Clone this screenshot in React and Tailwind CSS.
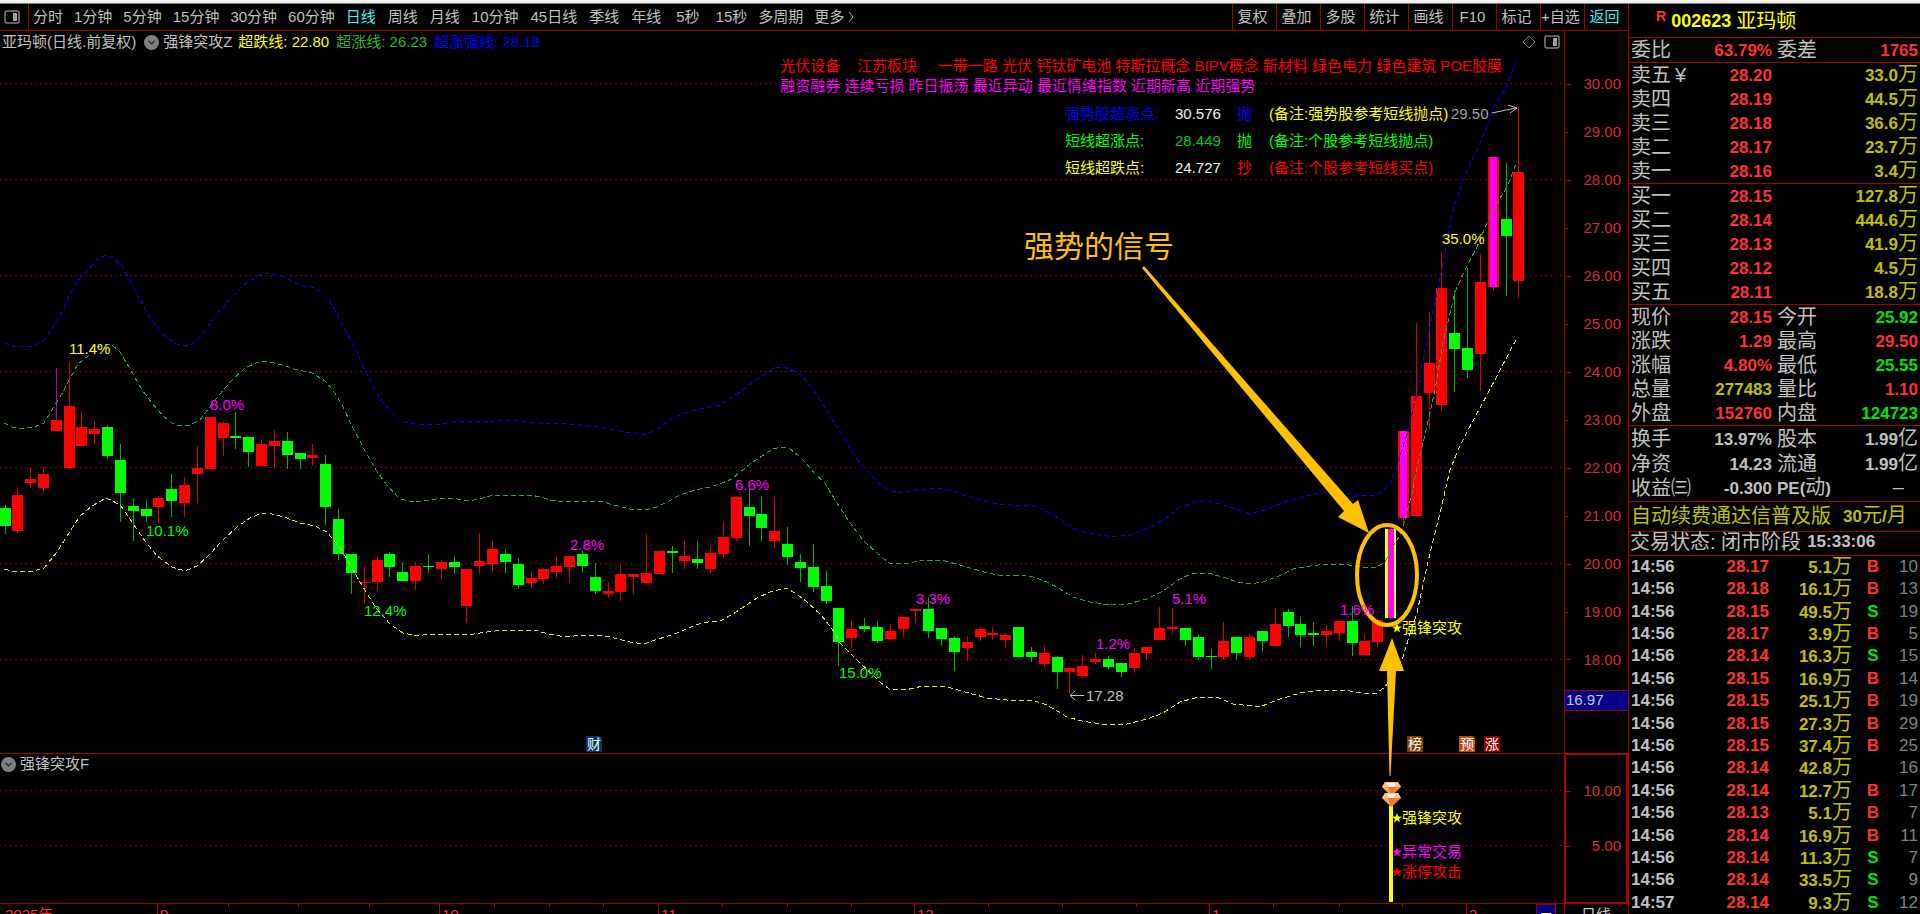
import { ChevronDown } from "lucide-react";

const MINUTES = ["分时", "1分钟", "5分钟", "15分钟", "30分钟", "60分钟"];
const PERIODS = ["日线", "周线", "月线", "10分钟", "45日线", "季线", "年线"];
const SECONDS = ["5秒", "15秒"];
const TOOLS = ["复权", "叠加", "多股", "统计", "画线", "F10", "标记", "+自选", "返回"];

// plot area, in chart units
const PLOT = { w: 1564, top: 31, h: 873 };
const priceY = (p) => 84 + (30 - p) * 48;

// [high, top, bottom, low, kind]
// R up, G down, P up with a violet wick, M violet core, Y signal bar
const CANDLES = [
  [505, 508, 526, 534, "G"], [487, 495, 531, 533, "R"], [468, 479, 483, 488, "R"], [468, 474, 488, 493, "R"],
  [368, 420, 431, 431, "P"], [362, 406, 468, 469, "R"], [411, 427, 446, 446, "R"], [421, 429, 434, 444, "R"],
  [425, 427, 456, 459, "G"], [444, 460, 493, 522, "G"], [498, 506, 511, 541, "G"], [501, 509, 516, 522, "G"],
  [496, 498, 507, 523, "R"], [474, 489, 501, 517, "G"], [477, 485, 503, 517, "R"], [446, 468, 474, 503, "R"],
  [417, 417, 469, 469, "R"], [421, 423, 438, 456, "R"], [412, 436, 438, 449, "G"], [437, 437, 452, 467, "G"],
  [439, 444, 466, 466, "R"], [430, 441, 446, 469, "R"], [432, 441, 455, 469, "G"], [453, 453, 459, 469, "G"],
  [444, 455, 458, 466, "R"], [455, 464, 507, 525, "G"], [509, 519, 554, 560, "G"], [554, 554, 573, 594, "G"],
  [566, 582, 583, 604, "R"], [556, 560, 582, 590, "R"], [552, 554, 567, 577, "G"], [562, 572, 581, 581, "G"],
  [562, 566, 581, 590, "R"], [554, 566, 567, 573, "G"], [560, 562, 569, 579, "R"], [556, 562, 567, 574, "G"],
  [569, 569, 606, 623, "R"], [533, 561, 566, 574, "R"], [541, 549, 564, 573, "R"], [549, 554, 562, 573, "G"],
  [558, 564, 585, 589, "G"], [572, 578, 583, 588, "R"], [568, 569, 579, 584, "R"], [557, 566, 572, 578, "R"],
  [556, 556, 567, 583, "R"], [550, 554, 566, 572, "G"], [563, 577, 591, 594, "G"], [582, 591, 594, 598, "R"],
  [565, 574, 592, 601, "R"], [574, 574, 577, 594, "R"], [534, 573, 583, 583, "R"], [551, 551, 574, 574, "R"],
  [546, 551, 553, 573, "G"], [541, 556, 561, 569, "R"], [541, 559, 563, 569, "G"], [546, 553, 569, 574, "R"],
  [522, 537, 554, 559, "R"], [496, 497, 538, 541, "R"], [485, 507, 516, 546, "G"], [496, 514, 528, 541, "G"],
  [497, 531, 541, 548, "R"], [527, 544, 557, 565, "G"], [554, 562, 568, 582, "G"], [544, 567, 587, 592, "G"],
  [571, 586, 601, 604, "G"], [608, 608, 642, 666, "G"], [621, 629, 638, 648, "R"], [618, 626, 629, 632, "G"],
  [621, 627, 641, 643, "G"], [624, 631, 639, 641, "R"], [617, 617, 629, 637, "R"], [609, 609, 611, 623, "R"],
  [597, 609, 631, 638, "G"], [628, 628, 639, 646, "G"], [636, 638, 652, 671, "G"], [636, 642, 648, 661, "R"],
  [627, 629, 637, 641, "R"], [627, 633, 635, 640, "R"], [633, 635, 640, 648, "R"], [627, 627, 657, 658, "G"],
  [647, 652, 657, 662, "G"], [646, 653, 664, 667, "R"], [656, 657, 672, 689, "G"], [668, 668, 672, 694, "R"],
  [655, 666, 676, 678, "R"], [653, 659, 662, 664, "R"], [656, 659, 667, 669, "G"], [663, 663, 672, 677, "G"],
  [648, 653, 668, 673, "R"], [646, 647, 653, 660, "R"], [607, 628, 640, 640, "R"], [608, 627, 629, 634, "R"],
  [628, 628, 640, 646, "G"], [634, 637, 657, 660, "G"], [649, 656, 657, 669, "G"], [622, 641, 657, 660, "R"],
  [637, 637, 653, 660, "G"], [634, 637, 657, 660, "R"], [631, 631, 641, 652, "G"], [608, 624, 646, 647, "R"],
  [609, 612, 626, 637, "G"], [617, 624, 635, 647, "G"], [622, 633, 635, 646, "G"], [625, 631, 635, 646, "R"],
  [620, 621, 633, 641, "R"], [606, 621, 643, 656, "G"], [634, 641, 655, 655, "R"], [618, 620, 642, 648, "R"],
  [529, 529, 618, 618, "Y"], [431, 431, 518, 527, "M"], [323, 396, 516, 516, "R"], [312, 363, 393, 429, "R"],
  [252, 288, 405, 411, "R"], [291, 333, 349, 392, "G"], [268, 348, 370, 378, "G"], [254, 282, 354, 391, "R"],
  [157, 157, 287, 291, "M"], [163, 219, 236, 296, "G"], [107, 172, 281, 298, "R"],
];

const BODY = { R: "#ff0000", G: "#00ff00", P: "#ff0000", M: "#ff0000", Y: "#ffff00" };
const WICK = { R: "#d80000", G: "#00b400", P: "#b400b4", M: "#d80000", Y: "#ffff00" };

const BANDS = [
  {
    color: "#0000ff",
    points:
      "4,343 14,346 26,347 34,346 44,340 54,326 63,310 70,294 80,278 88,270 97,260 106,255 113,258 123,267 135,290 146,311 158,329 170,340 177,344 184,346 192,344 200,337 207,327 221,309 232,297 243,286 251,280 259,275 266,273 275,275 284,277 294,282 303,286 312,287 320,291 328,299 335,310 345,330 357,352 365,370 377,394 388,409 400,421 415,424 440,424 460,421 480,422 510,420 540,423 570,424 600,427 625,432 644,435 657,430 672,418 695,410 720,405 740,392 760,377 775,368 785,367 800,374 812,388 825,408 841,433 851,450 860,463 870,473 878,483 890,491 902,493 915,490 937,488 950,490 963,495 980,500 997,504 1010,505 1030,505 1040,508 1055,516 1072,528 1087,533 1113,537 1130,535 1147,529 1165,519 1180,507 1197,501 1213,502 1230,507 1251,514 1267,509 1287,501 1307,496 1323,492 1340,492 1357,495 1375,496 1390,485 1394,473 1399,460 1408,430 1417,393 1425,350 1435,303 1445,253 1453,210 1465,175 1477,150 1487,127 1493,108 1507,87 1517,58",
  },
  {
    color: "#2ea82e",
    points:
      "4,423 12,427 21,429 34,427 44,423 52,410 63,392 70,378 78,364 88,356 97,347 106,344 112,345 120,352 130,369 142,390 152,403 163,416 172,423 180,426 190,425 200,420 209,408 220,394 232,380 245,368 256,363 263,361 274,363 286,366 294,369 303,371 312,373 325,381 333,390 342,405 353,428 363,447 374,467 386,484 400,499 414,502 430,500 443,498 457,499 468,501 480,499 490,496 505,495 519,496 530,495 541,497 550,500 563,502 585,501 600,501 610,504 622,507 630,509 645,510 657,507 667,502 680,495 695,490 710,487 722,483 732,479 740,472 750,464 762,456 773,449 782,447 790,449 798,455 806,463 815,474 825,483 835,500 850,523 863,540 877,553 889,563 903,564 920,561 933,560 945,561 960,565 980,571 997,575 1010,576 1022,575 1033,577 1047,582 1060,589 1073,597 1090,602 1110,605 1128,604 1147,599 1163,591 1180,579 1193,573 1208,573 1223,577 1237,582 1249,584 1263,582 1277,577 1293,569 1310,566 1327,564 1343,564 1360,567 1377,567 1385,562 1393,547 1400,535 1405,520 1412,493 1418,463 1425,435 1435,390 1443,343 1455,292 1465,270 1477,247 1487,223 1497,203 1507,187 1516,164",
  },
  {
    color: "#e6e600",
    points:
      "4,569 12,571 21,572 34,571 44,568 57,552 69,533 80,516 92,506 99,502 106,498 113,501 121,506 132,522 145,541 157,556 172,567 185,571 197,566 210,554 222,541 237,527 250,518 262,513 272,514 284,517 300,523 315,526 327,532 340,548 352,568 363,587 376,608 390,624 403,633 418,636 428,634 443,634 457,634 468,635 480,633 495,631 508,630 520,630 535,630 548,634 560,636 568,637 580,635 600,635 610,637 622,640 630,642 644,644 655,640 668,636 680,632 695,625 708,622 720,621 733,614 745,606 757,598 770,592 786,588 795,593 806,601 822,616 835,633 840,643 857,660 880,682 889,689 905,690 923,686 942,686 955,689 972,694 987,698 1007,700 1032,700 1047,705 1067,717 1082,721 1107,725 1127,724 1147,719 1163,713 1180,702 1195,698 1217,697 1233,704 1253,706 1262,706 1280,699 1300,693 1323,690 1343,690 1363,693 1377,693 1385,687 1402,660 1409,637 1417,613 1423,585 1430,553 1440,513 1450,470 1458,450 1466,434 1475,417 1487,395 1500,370 1517,338",
  },
];

const LABELS = [
  { x: 69, y: 349, text: "11.4%", cls: "text-[#ffff00]" },
  { x: 210, y: 405, text: "8.0%", cls: "text-[#ff00ff]" },
  { x: 146, y: 531, text: "10.1%", cls: "text-[#00ff00]" },
  { x: 364, y: 611, text: "12.4%", cls: "text-[#00ff00]" },
  { x: 570, y: 545, text: "2.8%", cls: "text-[#ff00ff]" },
  { x: 735, y: 485, text: "6.6%", cls: "text-[#ff00ff]" },
  { x: 839, y: 673, text: "15.0%", cls: "text-[#00ff00]" },
  { x: 916, y: 599, text: "3.3%", cls: "text-[#ff00ff]" },
  { x: 1096, y: 644, text: "1.2%", cls: "text-[#ff00ff]" },
  { x: 1172, y: 599, text: "5.1%", cls: "text-[#ff00ff]" },
  { x: 1340, y: 610, text: "1.6%", cls: "text-[#ff00ff]" },
  { x: 1442, y: 239, text: "35.0%", cls: "text-[#ffff00]" },
  { x: 1086, y: 696, text: "17.28", cls: "text-[#c0c0c0]" },
  { x: 1451, y: 114, text: "29.50", cls: "text-[#a0a0a0]" },
  { x: 1024, y: 247, text: "强势的信号", cls: "text-[30px] text-[#ffc000]" },
];

const STARS = [
  { y: 628, text: "强锋突攻", cls: "text-[#ffff00]" },
  { y: 818, text: "强锋突攻", cls: "text-[#ffff00]" },
  { y: 852, text: "异常交易", cls: "text-[#ff00ff]" },
  { y: 872, text: "涨停攻击", cls: "text-[#ff0000]" },
];

const BADGES = [
  { x: 586, text: "财", cls: "bg-[#00386b]" },
  { x: 1407, text: "榜", cls: "bg-[#804000]" },
  { x: 1459, text: "预", cls: "bg-[#c04810]" },
  { x: 1484, text: "涨", cls: "bg-[#900000]" },
];

const POINTS = [
  { name: "强势股超涨点:", value: "30.576", act: "抛", note: "(备注:强势股参考短线抛点)", n: "text-[#0000ff]", v: "text-[#f0f0f0]", a: "text-[#0000ff]", c: "text-[#ffff00]" },
  { name: "短线超涨点:", value: "28.449", act: "抛", note: "(备注:个股参考短线抛点)", n: "text-[#00ff00]", v: "text-[#00d000]", a: "text-[#00ff00]", c: "text-[#00ff00]" },
  { name: "短线超跌点:", value: "24.727", act: "抄", note: "(备注:个股参考短线买点)", n: "text-[#ffff00]", v: "text-[#f0f0f0]", a: "text-[#ff0000]", c: "text-[#ff0000]" },
];

const MONTHS = [
  { x: 157, text: "9" },
  { x: 439, text: "10" },
  { x: 658, text: "11" },
  { x: 914, text: "12" },
  { x: 1209, text: "1" },
  { x: 1466, text: "2" },
];
const WEEKS = [228, 298, 369, 494, 549, 603, 722, 787, 851, 988, 1062, 1136, 1273, 1339, 1402];

const SELLS = [
  ["卖五", "28.20", "33.0万"],
  ["卖四", "28.19", "44.5万"],
  ["卖三", "28.18", "36.6万"],
  ["卖二", "28.17", "23.7万"],
  ["卖一", "28.16", "3.4万"],
];
const BUYS = [
  ["买一", "28.15", "127.8万"],
  ["买二", "28.14", "444.6万"],
  ["买三", "28.13", "41.9万"],
  ["买四", "28.12", "4.5万"],
  ["买五", "28.11", "18.8万"],
];

const RED = "text-[#ff3232]";
const GREEN = "text-[#00e600]";
const GOLD = "text-[#c0c000]";
const GRAY = "text-[#c0c0c0]";

const RATIO = [["委比", "63.79%", RED, "委差", "1765", RED]];
const QUOTE = [
  ["现价", "28.15", RED, "今开", "25.92", GREEN],
  ["涨跌", "1.29", RED, "最高", "29.50", RED],
  ["涨幅", "4.80%", RED, "最低", "25.55", GREEN],
  ["总量", "277483", GOLD, "量比", "1.10", RED],
  ["外盘", "152760", RED, "内盘", "124723", GREEN],
];
const BASICS = [
  ["换手", "13.97%", GRAY, "股本", "1.99亿", GRAY],
  ["净资", "14.23", GRAY, "流通", "1.99亿", GRAY],
  ["收益㈢", "-0.300", GRAY, "PE(动)", "–   ", GRAY],
];

const TRADES = [
  ["14:56", "28.17", "5.1万", "B", 10],
  ["14:56", "28.18", "16.1万", "B", 13],
  ["14:56", "28.15", "49.5万", "S", 19],
  ["14:56", "28.17", "3.9万", "B", 5],
  ["14:56", "28.14", "16.3万", "S", 15],
  ["14:56", "28.15", "16.9万", "B", 14],
  ["14:56", "28.15", "25.1万", "B", 19],
  ["14:56", "28.15", "27.3万", "B", 29],
  ["14:56", "28.15", "37.4万", "B", 25],
  ["14:56", "28.14", "42.8万", "", 16],
  ["14:56", "28.14", "12.7万", "B", 17],
  ["14:56", "28.13", "5.1万", "B", 7],
  ["14:56", "28.14", "16.9万", "B", 11],
  ["14:56", "28.14", "11.3万", "S", 7],
  ["14:56", "28.14", "33.5万", "S", 9],
  ["14:57", "28.14", "9.3万", "S", 12],
];

const left = (x) => `${(x / PLOT.w) * 100}%`;
const top = (y) => `${((y - PLOT.top) / PLOT.h) * 100}%`;

// figures are bold and a little smaller than the Chinese text beside them
function Mixed({ text }) {
  return text.split(/([\x20-\x7e]+)/).map((part, i) =>
    i % 2 ? (
      <span key={i} className="text-[17px] font-bold">
        {part}
      </span>
    ) : (
      part
    )
  );
}

function PaneIcon() {
  return (
    <svg width="16" height="14" viewBox="0 0 16 14" fill="none">
      <rect x="1" y="1" width="14" height="12" rx="2" stroke="#808080" strokeWidth="1.5" />
      <rect x="9" y="3" width="4" height="8" fill="#a0a0a0" />
    </svg>
  );
}

function MenuDot() {
  return (
    <button type="button" aria-label="指标菜单" className="flex size-[15px] items-center justify-center rounded-full bg-[#808080] text-[#202020]">
      <ChevronDown size={11} strokeWidth={3} />
    </button>
  );
}

function Star() {
  return (
    <svg width="10" height="10" viewBox="0 0 10 10" fill="currentColor">
      <path d="M5 0l1.3 3.6H10L7 5.9 8.2 9.6 5 7.3 1.800 9.600 3 5.900 0 3.600h3.700z" />
    </svg>
  );
}

function Toolbar() {
  return (
    <header className="flex h-[27px] shrink-0 items-stretch border-b border-[#a00000] text-[#c0c0c0]">
      <button type="button" aria-label="侧栏" className="flex w-[29px] items-center border-r border-[#a00000] pl-1">
        <PaneIcon />
      </button>
      <nav className="flex flex-1 items-center gap-[11px] whitespace-nowrap pl-1">
        {MINUTES.map((m) => (
          <button type="button" key={m}>{m}</button>
        ))}
        <div className="flex gap-3">
          {PERIODS.map((p) => (
            <button type="button" key={p} className={p === "日线" ? "text-[#40f0f0]" : ""}>
              {p}
            </button>
          ))}
        </div>
        <div className="flex gap-4 pl-1">
          {SECONDS.map((s) => (
            <button type="button" key={s}>{s}</button>
          ))}
        </div>
        <button type="button">多周期</button>
        <button type="button" className="flex items-center gap-1">
          更多
          <svg width="6" height="12" viewBox="0 0 6 12" fill="none" stroke="currentColor">
            <path d="M1 1l4 5-4 5" />
          </svg>
        </button>
      </nav>
      {TOOLS.map((t) => (
        <button
          type="button"
          key={t}
          className={`w-11 shrink-0 whitespace-nowrap border-l border-[#a00000] pr-1 ${t === "返回" ? "text-[#40f0f0]" : ""}`}
        >
          {t}
        </button>
      ))}
    </header>
  );
}

function Candle({ i, data }) {
  const [high, bodyTop, bottom, low, kind] = data;
  const x = Math.round(4.5 + 12.83 * i);
  return (
    <g>
      <rect x={x} y={high} width="1" height={low - high} fill={WICK[kind]} />
      <rect x={x - 5} y={bodyTop} width="11" height={bottom - bodyTop} fill={BODY[kind]} />
      {kind === "M" && <rect x={x - 3} y={bodyTop} width="7" height={bottom - bodyTop} fill="#ff00ff" />}
      {kind === "Y" && <rect x={x - 2} y={bodyTop} width="6" height={bottom - bodyTop} fill="#ff00ff" />}
    </g>
  );
}

function Gem({ y }) {
  return (
    <g transform={`translate(1382 ${y})`}>
      <path d="M3 0h13l3 5-9.500 9L0 5z" fill="#e88a38" />
      <path d="M3 0h13l3 5H0z" fill="#f8c890" />
      <path d="M5 1h9l-2 4H7z" fill="#fff0d8" />
      <path d="M0 5h6l3.500 9z" fill="#f0a860" />
      <path d="M6 5h7l-3.500 9z" fill="#f07820" />
    </g>
  );
}

function PlotDrawing() {
  return (
    <svg
      className="absolute inset-0 h-full w-full"
      viewBox="0 31 1564 873"
      preserveAspectRatio="none"
      fill="none"
    >
      <g stroke="#780000" strokeDasharray="2 3" shapeRendering="crispEdges">
        {[30, 28, 26, 24, 22, 20, 18].map((p) => (
          <path key={p} d={`M0 ${priceY(p) - 0.5}H1564`} />
        ))}
        <path d="M0 790.5H1564M0 845.5H1564" />
      </g>
      <g shapeRendering="crispEdges">
        {CANDLES.map((c, i) => (
          <Candle key={i} i={i} data={c} />
        ))}
        {BANDS.map((b) => (
          <polyline key={b.color} points={b.points} stroke={b.color} strokeDasharray="5 3" />
        ))}
      </g>
      <g stroke="#c0c0c0">
        <path d="M1084 695.500H1070M1075 691l-5 4.500 5 4.500" />
        <path d="M1492 113l24-5M1508 105l9 3-7 5" />
      </g>
      <rect x="1389" y="806" width="4" height="96" fill="#ffff00" />
      <Gem y={782} />
      <Gem y={793} />
      <g fill="#ffc000">
        <path d="M1142 268l2-2 209 238 5-4 11 33-31-16 6-6z" />
        <path d="M1392 638l12 33h-8l-5.500 105h-1L1387 671h-8z" />
      </g>
      <ellipse cx="1387" cy="575" rx="30" ry="50" stroke="#ffc000" strokeWidth="4" />
    </svg>
  );
}

function PlotLabels() {
  return (
    <>
      {LABELS.map((l) => (
        <span
          key={`${l.x}-${l.text}`}
          className={`absolute -translate-y-1/2 whitespace-nowrap ${l.cls}`}
          style={{ left: left(l.x), top: top(l.y) }}
        >
          {l.text}
        </span>
      ))}
      {STARS.map((s) => (
        <span
          key={s.y}
          className={`absolute flex -translate-y-1/2 items-center whitespace-nowrap ${s.cls}`}
          style={{ left: left(1392), top: top(s.y) }}
        >
          <Star />
          {s.text}
        </span>
      ))}
      {BADGES.map((b) => (
        <span
          key={b.text}
          className={`absolute size-4 -translate-y-1/2 rounded-tr-[3px] text-center text-[14px] leading-4 text-white ${b.cls}`}
          style={{ left: left(b.x), top: top(744) }}
        >
          {b.text}
        </span>
      ))}
    </>
  );
}

function MainPane() {
  return (
    <section className="flex min-h-0 flex-1 flex-col border-b border-[#a00000]">
      <div className="flex h-[22px] shrink-0 items-center justify-between pl-[2px] pr-1">
        <div className="flex items-center gap-1 whitespace-nowrap">
          <span className="mr-1 text-[#c0c0c0]">亚玛顿(日线.前复权)</span>
          <MenuDot />
          <span className="text-[#c0c0c0]">强锋突攻Z</span>
          <div className="flex gap-[7px] pl-[2px]">
            <span className="text-[#ffff00]">超跌线: 22.80</span>
            <span className="text-[#32b432]">超涨线: 26.23</span>
            <span className="text-[#0000ff]">超涨强线: 28.19</span>
          </div>
        </div>
        <div className="flex items-center gap-2">
          <svg width="14" height="14" viewBox="0 0 14 14" fill="none" stroke="#808080">
            <path d="M7 1l6 6-6 6-6-6z" />
          </svg>
          <PaneIcon />
        </div>
      </div>
      <div className="flex flex-col self-end whitespace-pre pr-[62px] pt-[3px]">
        <p className="text-[#ff0000]">光伏设备    江苏板块     一带一路 光伏 钙钛矿电池 特斯拉概念 BIPV概念 新材料 绿色电力 绿色建筑 POE胶膜</p>
        <p className="text-[#ff00ff]">融资融券 连续亏损 昨日振荡 最近异动 最近情绪指数 近期新高 近期强势</p>
      </div>
      <div className="mt-2 flex flex-col gap-[7px] self-end whitespace-nowrap pr-[117px]">
        {POINTS.map((p) => (
          <div key={p.name} className="flex">
            <span className={`w-[110px] ${p.n}`}>{p.name}</span>
            <span className={`w-[62px] ${p.v}`}>{p.value}</span>
            <span className={`w-8 ${p.a}`}>{p.act}</span>
            <span className={`w-[178px] ${p.c}`}>{p.note}</span>
          </div>
        ))}
      </div>
    </section>
  );
}

function IndicatorPane() {
  return (
    <section className="h-[150px] shrink-0 border-b border-[#a00000] pl-[1px]">
      <div className="flex h-5 items-center gap-1 text-[#c0c0c0]">
        <MenuDot />
        <span>强锋突攻F</span>
      </div>
    </section>
  );
}

function PriceAxis() {
  const prices = Array.from({ length: 13 }, (_, i) => 30 - i);
  return (
    <div className="flex w-16 shrink-0 flex-col text-[#d83030]">
      <div className="relative min-h-0 flex-1 border-l border-[#a00000]">
        {prices.map((p) => (
          <div
            key={p}
            className="absolute inset-x-0 flex -translate-y-1/2 items-center justify-between pr-[7px]"
            style={{ top: `${((priceY(p) - 31) / 722) * 100}%` }}
          >
            <i className={`h-px bg-[#a00000] ${p % 2 ? "w-[3px]" : "w-[6px]"}`} />
            <span>{p.toFixed(2)}</span>
          </div>
        ))}
        <div className="absolute inset-x-0 bottom-[42px] h-[21px] border-y border-[#a00000] bg-[#000088] pl-px leading-[18px] text-[#c8c8d8]">
          16.97
        </div>
      </div>
      <div className="flex h-[151px] shrink-0 flex-col border-2 border-[#b00000] pr-[5px] pt-[26px]">
        <div className="flex items-center justify-between">
          <i className="h-px w-[5px] bg-[#a00000]" />
          <span>10.00</span>
        </div>
        <div className="mt-[35px] flex items-center justify-between">
          <i className="h-px w-[5px] bg-[#a00000]" />
          <span>5.00</span>
        </div>
      </div>
    </div>
  );
}

function TimeAxis() {
  return (
    <footer className="flex h-[10px] shrink-0 overflow-hidden text-[#ff3232]">
      <div className="relative flex-1 pl-[5px] pt-px">
        2025年
        {MONTHS.map((m) => (
          <span
            key={m.text}
            className="absolute top-0 h-6 border-l border-[#c00000] pl-[2px] pt-px"
            style={{ left: left(m.x) }}
          >
            {m.text}
          </span>
        ))}
        {WEEKS.map((x) => (
          <i key={x} className="absolute top-0 h-[3px] w-px bg-[#c00000]" style={{ left: left(x) }} />
        ))}
        <span className="absolute top-0 h-6 w-5 border border-[#900000] bg-[#000088] pt-[3px] text-center text-[13px] text-white" style={{ left: left(1536) }}>
          二
        </span>
      </div>
      <div className="w-16 border-l border-[#a00000] pl-[16px] pt-px text-[#c8c8c8]">日线</div>
    </footer>
  );
}

function DepthTable({ rows, unit }) {
  return (
    <table className="w-full table-fixed border-b border-[#a80000]">
      <tbody>
        {rows.map(([name, price, vol], i) => (
          <tr key={name} className="h-6">
            <th scope="row" className="w-[60px] p-0 pl-0.5 text-left font-normal text-[#c0c0c0]">
              {name}
              {unit && i === 0 && <span className="pl-1">¥</span>}
            </th>
            <td className="w-[83px] p-0 text-right text-[#ff3232]">
              <Mixed text={price} />
            </td>
            <td className="p-0 pr-0.5 text-right text-[#c0c000]">
              <Mixed text={vol} />
            </td>
          </tr>
        ))}
      </tbody>
    </table>
  );
}

function PairTable({ rows, row = "h-6" }) {
  return (
    <table className="w-full table-fixed border-b border-[#a80000]">
      <tbody>
        {rows.map(([a, av, ac, b, bv, bc]) => (
          <tr key={a} className={row}>
            <th scope="row" className="w-[64px] p-0 pl-0.5 text-left font-normal text-[#c0c0c0]">{a}</th>
            <td className={`w-[79px] p-0 text-right ${ac}`}>
              <Mixed text={av} />
            </td>
            <th scope="row" className="w-[62px] p-0 pl-[5px] text-left font-normal text-[#c0c0c0]">
              <Mixed text={b} />
            </th>
            <td className={`whitespace-pre p-0 pr-0.5 text-right ${bc}`}>
              <Mixed text={bv} />
            </td>
          </tr>
        ))}
      </tbody>
    </table>
  );
}

function QuotePanel() {
  return (
    <aside className="flex w-[292px] shrink-0 flex-col overflow-hidden whitespace-nowrap border-l border-[#a80000] text-[20px] leading-[22px] text-[#c0c0c0]">
      <h1 className="flex h-[34px] shrink-0 items-center border-b border-[#a80000] pl-[27px] text-[#ffff00]">
        <span className="self-start pt-[1px] text-[14px] font-bold text-[#ff3232]">R</span>
        <span className="pl-[5px] pr-[5px] text-[18px] font-bold">002623</span>
        <span>亚玛顿</span>
      </h1>
      <PairTable rows={RATIO} />
      <DepthTable rows={SELLS} unit />
      <DepthTable rows={BUYS} />
      <PairTable rows={QUOTE} />
      <PairTable rows={BASICS} row="h-[25px]" />
      <a href="#renew" className="flex h-[30px] shrink-0 items-center gap-3 border-b border-[#a80000] pb-px pl-0.5 text-[#c0c000]">
        <span>自动续费通达信普及版</span>
        <span>
          <Mixed text="30元/月" />
        </span>
      </a>
      <p className="flex h-6 shrink-0 items-center gap-[6px] border-b border-[#a80000] pb-[2px] pl-px">
        <span>交易状态: 闭市阶段</span>
        <span className="text-[17px] font-bold">15:33:06</span>
      </p>
      <div className="min-h-0 flex-1 leading-4">
        <table className="h-full w-full table-fixed">
          <tbody>
            {TRADES.map(([time, price, vol, side, count], i) => (
              <tr key={i}>
                <td className="w-[60px] p-0 pl-0.5 text-[17px] font-bold">{time}</td>
                <td className="w-20 p-0 text-right text-[17px] font-bold text-[#ff3232]">{price}</td>
                <td className="w-[83px] p-0 text-right text-[#c0c000]">
                  <Mixed text={vol} />
                </td>
                <td className={`w-[42px] p-0 text-center text-[17px] font-bold ${side === "S" ? GREEN : RED}`}>{side}</td>
                <td className="p-0 pr-0.5 text-right text-[17px] text-[#808080]">{count}</td>
              </tr>
            ))}
          </tbody>
        </table>
      </div>
    </aside>
  );
}

export default function App() {
  return (
    <div className="flex h-screen flex-col overflow-hidden bg-black font-['Liberation_Sans','Noto_Sans_CJK_SC',sans-serif] text-[15px] leading-5">
      <div className="h-1 shrink-0 border-b border-[#808080] bg-[#f0f0f0]" />
      <div className="flex min-h-0 flex-1">
        <main className="flex min-w-0 flex-1 flex-col">
          <Toolbar />
          <div className="flex min-h-0 flex-1">
            <div className="relative flex min-w-0 flex-1 flex-col">
              <PlotDrawing />
              <MainPane />
              <IndicatorPane />
              <PlotLabels />
            </div>
            <PriceAxis />
          </div>
          <TimeAxis />
        </main>
        <QuotePanel />
      </div>
    </div>
  );
}
